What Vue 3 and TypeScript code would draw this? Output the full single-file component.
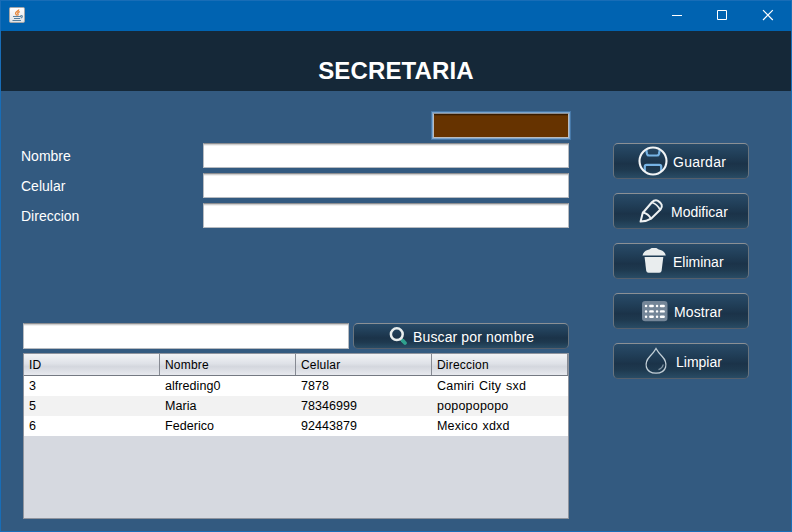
<script setup lang="ts">
import { ref } from 'vue'

interface Person {
  id: number
  name: string
  phone: string
  address: string
}

const fields = ref([
  { label: 'Nombre', value: '' },
  { label: 'Celular', value: '' },
  { label: 'Direccion', value: '' },
])
const code = ref('')
const query = ref('')
const actions = [
  { key: 'save', label: 'Guardar' },
  { key: 'edit', label: 'Modificar' },
  { key: 'remove', label: 'Eliminar' },
  { key: 'show', label: 'Mostrar' },
  { key: 'clear', label: 'Limpiar' },
]
const columns = ['ID', 'Nombre', 'Celular', 'Direccion']
const people: Person[] = [
  { id: 3, name: 'alfreding0', phone: '7878', address: 'Camiri City sxd' },
  { id: 5, name: 'Maria', phone: '78346999', address: 'popopopopo' },
  { id: 6, name: 'Federico', phone: '92443879', address: 'Mexico xdxd' },
]
</script>

<template>
  <div class="window">
    <div class="titlebar">
      <svg class="java" width="16" height="16" viewBox="0 0 16 16">
        <defs>
          <linearGradient id="tile" x1="0" y1="0" x2="0" y2="1">
            <stop offset="0" stop-color="#fff" />
            <stop offset="1" stop-color="#dfe2e5" />
          </linearGradient>
        </defs>
        <rect x=".5" y=".5" width="15" height="15" rx="1.3" fill="url(#tile)" stroke="#a5a7a9" />
        <path d="M9.800 2.400C9.800 4 6.500 4.700 6.600 6.300c.1.9.8 1.300 1.100 2.200M10.800 4.600C8.700 5.300 8.300 6 9 6.800c.5.600 0 1.200-.5 1.700" fill="none" stroke="#e58335" stroke-width="1.300" />
        <path d="M4 9.500h8M5 11.500h6M3.500 13.500h8.500M11.500 8.500c2.500-.3 2.300 2 .2 2.600" fill="none" stroke="#55809f" stroke-width="1.100" />
      </svg>
      <svg class="controls" width="104" height="12" viewBox="0 0 104 12">
        <path d="M0 6.500h10M45.500 1.500h9v9h-9z" fill="none" stroke="#fff" />
        <path d="M91 1.200l9.800 9.800M100.800 1.200L91 11" fill="none" stroke="#fff" stroke-width="1.200" />
      </svg>
    </div>

    <header><h1>SECRETARIA</h1></header>

    <main>
      <section class="left">
        <input v-model="code" class="code" type="text" />
        <div class="form">
          <label v-for="f in fields" :key="f.label" class="row">
            <span>{{ f.label }}</span>
            <input v-model="f.value" class="field" type="text" />
          </label>
        </div>
        <div class="search">
          <input v-model="query" class="field query" type="text" />
          <button class="btn find">
            <svg width="19" height="19" viewBox="0 0 19 19" fill="none">
              <path d="M11.500 11.500l3 3" stroke="#b9c2c7" stroke-width="3" />
              <path d="M13.700 13.700l2.300 2.300" stroke="#2fa28e" stroke-width="3.800" stroke-linecap="round" />
              <circle cx="7.800" cy="7.200" r="5.900" stroke="#e8eded" stroke-width="2.500" />
            </svg>
            <span>Buscar por nombre</span>
          </button>
        </div>
        <div class="table">
          <div class="line head">
            <div v-for="c in columns" :key="c">{{ c }}</div>
          </div>
          <div v-for="p in people" :key="p.id" class="line body">
            <div>{{ p.id }}</div>
            <div>{{ p.name }}</div>
            <div>{{ p.phone }}</div>
            <div class="address">{{ p.address }}</div>
          </div>
        </div>
      </section>

      <nav>
        <button v-for="a in actions" :key="a.key" class="btn action" :class="a.key">
          <svg v-if="a.key === 'save'" width="30" height="30" viewBox="0 0 30 30" fill="none">
            <path d="M8.500 3.500v2l.6 2.600q.4 1.400 1.900 1.400h8q1.500 0 1.900-1.400l.6-2.600V3.500M6.800 25v-4.500q0-1.700 1.700-1.700h13q1.700 0 1.700 1.700V25" stroke="#76b3e4" stroke-width="2.200" />
            <circle cx="15" cy="15" r="13.500" stroke="#f2f4f5" stroke-width="2.100" />
          </svg>
          <svg v-else-if="a.key === 'edit'" width="30" height="30" viewBox="0 0 30 30" fill="none" stroke="#eef1f2" stroke-width="2" stroke-linejoin="round" stroke-linecap="round">
            <path d="M4.600 25.600L6.700 17L15.700 6.500Q18.800 3.300 22 4.800Q28 8.500 24.700 13.200L15 22.700Q11 25.300 4.600 25.600z" />
            <path d="M16 6.500Q21.500 8.500 24 13.700M7 16.500Q12.500 17.800 14.800 22.500" stroke-width="1.800" />
          </svg>
          <svg v-else-if="a.key === 'remove'" width="30" height="30" viewBox="0 0 30 30" fill="#e9edee">
            <path d="M3.500 9.500Q4.500 5 8.500 4Q10.500 3.800 11.500 2.700q.4-.7 1.500-.7h4q1 0 1.500.7 1 1.100 3 1.300 4.300 1 5.300 5.500z" />
            <path d="M5.600 11h18.700l-1.700 13.700q-.3 2-2.300 2H9.500q-2 0-2.300-2z" />
          </svg>
          <svg v-else-if="a.key === 'show'" width="30" height="30" viewBox="0 0 30 30">
            <rect x="2" y="5" width="25.500" height="20.300" rx="3.200" fill="#748698" />
            <path d="M6 10h.1M10.300 10h2.400M17 10h.1M21 10h2.700M6 15.400h.1M10.300 15.400h2.400M17 15.400h.1M21 15.400h2.700M6 20.700h.1M10.300 20.700h2.400M17 20.700h.1M21 20.700h2.700" stroke="#fff" stroke-width="2.400" stroke-linecap="round" />
          </svg>
          <svg v-else width="30" height="30" viewBox="0 0 30 30" fill="none">
            <path d="M15 2.500Q12.800 6.500 9 10.200C2.500 17 4 27.200 15 27.200S27.500 17 21 10.200Q17.200 6.500 15 2.500z" stroke="#c3cfd7" stroke-width="1.300" />
            <path d="M17.500 23.600q4-1.300 4.700-5.100" stroke="#8194a3" stroke-width="1.300" />
          </svg>
          <span>{{ a.label }}</span>
        </button>
      </nav>
    </main>
  </div>
</template>

<style>
body {
  margin: 0;
}
</style>

<style scoped>
.window {
  box-sizing: border-box;
  width: 792px;
  height: 532px;
  border: 1px solid #186db7;
  background: #335a80;
  color: #fff;
  font: 14px "Liberation Sans", Arial, sans-serif;
  overflow: hidden;
}
.titlebar {
  height: 30px;
  background: #0063b1;
  display: flex;
  justify-content: space-between;
  box-sizing: border-box;
  padding: 6px 15px 0 8px;
}
.controls {
  margin-top: 2px;
}
header {
  height: 60px;
  background: #152838;
  box-sizing: border-box;
  padding-top: 26px;
}
h1 {
  margin: 0;
  text-align: center;
  font-size: 24px;
  line-height: 28px;
  font-weight: bold;
  letter-spacing: 0.13px;
}
main {
  display: flex;
  gap: 44px;
  padding-left: 20px;
}
.left {
  width: 548px;
  padding-top: 22px;
  display: flex;
  flex-direction: column;
}
input {
  box-sizing: border-box;
  display: block;
  padding: 0 6px;
  border-radius: 0;
  outline: none;
  font: inherit;
}
.code {
  align-self: flex-end;
  width: 136px;
  height: 25px;
  margin-bottom: 5px;
  border: 1px solid #b9bcc0;
  border-top-color: #8d8e91;
  background: #663300;
  box-shadow: 0 0 0 1px #7ba4cd, 0 0 0 2px #4678a8, inset 0 1px #371b00, inset 0 2px #562b00;
  color: #fff;
}
.form {
  display: flex;
  flex-direction: column;
  gap: 5px;
}
.row {
  display: flex;
  justify-content: space-between;
  line-height: 26px;
  height: 25px;
}
.field {
  width: 366px;
  height: 25px;
  border: 1px solid #b7bbc0;
  border-top-color: #8d8e91;
  background: #fff;
  box-shadow: inset 0 1px #cfcfcf, inset 0 2px #efefef;
}
.search {
  display: flex;
  gap: 4px;
  margin: 95px 0 4px 2px;
}
.query {
  width: 326px;
  height: 26px;
}
.btn {
  box-sizing: border-box;
  display: flex;
  align-items: center;
  border: 1px solid;
  border-color: #8b9095 #69747e #555f6c #69747e;
  border-radius: 5px;
  background: linear-gradient(#294b68 0%, #203d56 35%, #1b3349 58%, #1e394f 76%, #294c65 100%);
  color: #fff;
  font: 14px "Liberation Sans", Arial, sans-serif;
  padding: 0;
}
.find {
  width: 216px;
  height: 26px;
  padding: 1px 0 0 35px;
  letter-spacing: 0.13px;
  gap: 5px;
}
.table {
  margin-left: 2px;
  width: 546px;
  height: 166px;
  box-sizing: border-box;
  border: 1px solid #8f949e;
  background: #d6d9e0;
  color: #000;
}
.line {
  display: grid;
  grid-template-columns: repeat(4, 136px);
}
.head {
  height: 22px;
  box-sizing: border-box;
  border-bottom: 1px solid #747982;
  background: linear-gradient(#f2f3f6 0%, #dfe2e8 45%, #d4d7de 60%, #e7e9ee 100%);
  font-size: 12px;
  line-height: 22px;
  letter-spacing: 0.2px;
}
.line > div {
  padding-left: 5px;
  white-space: nowrap;
}
.head > div {
  height: 21px;
  box-sizing: border-box;
  border-right: 1px solid #868a93;
}
.body {
  height: 20px;
  line-height: 21px;
  font-size: 12.5px;
  letter-spacing: 0.05px;
  background: #fff;
}
.body:nth-child(odd) {
  background: #f2f2f2;
}
.body .address {
  letter-spacing: 0.2px;
  word-spacing: 1px;
}
nav {
  padding-top: 52px;
  display: flex;
  flex-direction: column;
  gap: 14px;
}
.action {
  width: 136px;
  height: 36px;
  padding-left: 24px;
  gap: 5px;
}
.action span {
  padding-top: 2px;
}
.save {
  letter-spacing: 0.25px;
}
.edit {
  padding-left: 22px;
}
.remove {
  padding-left: 25px;
  gap: 4px;
}
.show {
  padding-left: 26px;
  gap: 4px;
  letter-spacing: 0.1px;
}
.clear {
  padding-left: 27px;
}
svg {
  flex: none;
}
</style>
